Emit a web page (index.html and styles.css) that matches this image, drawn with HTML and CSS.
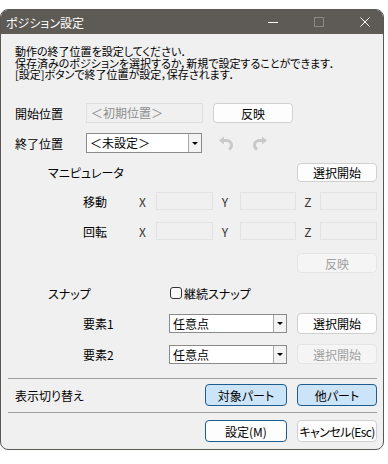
FILE: index.html
```html
<!DOCTYPE html>
<html lang="ja">
<head>
  <meta charset="UTF-8">
  <title>ポジション設定</title>
  <link rel="stylesheet" href="styles.css">
</head>
<body>
<div class="window">
  <div class="titlebar">
    <span class="title">ポジション設定</span>
    <div class="controls">
      <span class="ctl-min"></span>
      <span class="ctl-max"></span>
      <svg class="ctl-close" width="10" height="10" viewBox="0 0 10 10">
        <path d="M0.5 0.5 L9.5 9.5 M9.5 0.5 L0.5 9.5" stroke="#fff" stroke-width="1" fill="none"/>
      </svg>
    </div>
  </div>

  <div class="content">
    <div class="desc">
      <div class="desc-line">動作の終了位置を設定してください．</div>
      <div class="desc-line">保存済みのポジションを選択するか，新規で設定することができます．</div>
      <div class="desc-line">[設定]ボタンで終了位置が設定，保存されます．</div>
    </div>

    <div class="row row-start">
      <span class="label w71">開始位置</span>
      <div class="field field-disabled">＜初期位置＞</div>
      <button class="btn">反映</button>
    </div>

    <div class="row row-end">
      <span class="label w71">終了位置</span>
      <div class="combo combo-end">
        <span class="combo-text">＜未設定＞</span>
        <span class="combo-drop"><i class="tri"></i></span>
      </div>
      <svg class="icon-undo" width="16" height="16" viewBox="0 0 16 16">
        <path d="M1 5.5 L6 1.5 L6 9.5 Z" fill="#c9c9c9"/>
        <path d="M5 5.5 H8.5 C11.5 5.5 13.5 7.5 13.5 10 C13.5 12 12.5 13.5 11 14.5" stroke="#c9c9c9" stroke-width="3" fill="none"/>
      </svg>
      <svg class="icon-redo" width="16" height="16" viewBox="0 0 16 16">
        <path d="M15 5.5 L10 1.5 L10 9.5 Z" fill="#c9c9c9"/>
        <path d="M11 5.5 H7.5 C4.5 5.5 2.5 7.5 2.5 10 C2.5 12 3.5 13.5 5 14.5" stroke="#c9c9c9" stroke-width="3" fill="none"/>
      </svg>
    </div>

    <div class="row row-mani indent1">
      <span class="label">マニピュレータ</span>
      <button class="btn push-right">選択開始</button>
    </div>

    <div class="row row-move indent2">
      <span class="label w56">移動</span>
      <span class="axis ax-x">X</span>
      <div class="xyz"></div>
      <span class="axis ax-y">Y</span>
      <div class="xyz"></div>
      <span class="axis ax-z">Z</span>
      <div class="xyz"></div>
    </div>

    <div class="row row-rot indent2">
      <span class="label w56">回転</span>
      <span class="axis ax-x">X</span>
      <div class="xyz"></div>
      <span class="axis ax-y">Y</span>
      <div class="xyz"></div>
      <span class="axis ax-z">Z</span>
      <div class="xyz"></div>
    </div>

    <div class="row row-apply">
      <button class="btn btn-disabled push-right" disabled>反映</button>
    </div>

    <div class="row row-snap indent1">
      <span class="label w122">スナップ</span>
      <span class="check"></span>
      <span class="check-label">継続スナップ</span>
    </div>

    <div class="row row-el1 indent2">
      <span class="label w86">要素1</span>
      <div class="combo combo-el">
        <span class="combo-text">任意点</span>
        <span class="combo-drop"><i class="tri"></i></span>
      </div>
      <button class="btn">選択開始</button>
    </div>

    <div class="row row-el2 indent2">
      <span class="label w86">要素2</span>
      <div class="combo combo-el">
        <span class="combo-text">任意点</span>
        <span class="combo-drop"><i class="tri"></i></span>
      </div>
      <button class="btn btn-disabled" disabled>選択開始</button>
    </div>

    <div class="sep sep-1"></div>

    <div class="row row-view">
      <span class="label">表示切り替え</span>
      <div class="btn-pair push-right">
        <button class="btn btn-toggle btn-wide">対象パート</button>
        <button class="btn btn-toggle">他パート</button>
      </div>
    </div>

    <div class="sep sep-2"></div>

    <div class="row row-footer">
      <div class="btn-pair push-right">
        <button class="btn btn-default btn-wide">設定(M)</button>
        <button class="btn btn-cancel">キャンセル(Esc)</button>
      </div>
    </div>
  </div>
</div>
</body>
</html>
```

FILE: styles.css
```css
body {
  margin: 0;
  background: #ffffff;
  font-family: "Noto Sans CJK JP", "Noto Sans", sans-serif;
  font-size: 12px;
  font-feature-settings: "palt";
  color: #000;
}

.window {
  width: 384px;
  margin-top: 9px;
  box-sizing: border-box;
  border: 1px solid #5b5753;
  border-radius: 8px;
  overflow: hidden;
  background: #f0f0f0;
}

/* タイトルバー */
.titlebar {
  height: 24px;
  background: #5e5a55;
  display: flex;
  align-items: center;
  padding: 0 13px 0 5px;
}
.title {
  color: #fff;
  font-size: 12px;
}
.controls {
  margin-left: auto;
  display: flex;
  align-items: center;
  gap: 36px;
}
.ctl-min {
  display: block;
  width: 10px;
  height: 1px;
  background: #fff;
}
.ctl-max {
  display: block;
  width: 8px;
  height: 8px;
  border: 1px solid #8c8884;
}
.ctl-close {
  display: block;
}

/* 本体 */
.content {
  padding: 0 6px 7px 14px;
}

.desc {
  margin-top: 12px;
  height: 57px;
  font-size: 11px;
}
.desc-line {
  height: 11.5px;
  line-height: 11.5px;
  white-space: nowrap;
}

.row {
  display: flex;
  align-items: center;
}
.indent1 { padding-left: 33px; }
.indent2 { padding-left: 68px; }

.label { flex: none; }
.w56 { width: 56px; }
.w71 { width: 71px; }
.w86 { width: 86px; }
.w122 { width: 122px; }

.push-right { margin-left: auto; }

.row-start { height: 20px; }
.row-end { height: 20px; margin-top: 10px; }
.row-mani { height: 19px; margin-top: 10px; }
.row-move { height: 18px; margin-top: 10px; }
.row-rot { height: 18px; margin-top: 12px; }
.row-apply { height: 20px; margin-top: 13px; }
.row-snap { height: 14px; margin-top: 13px; }
.row-el1 { height: 21px; margin-top: 13px; }
.row-el2 { height: 20px; margin-top: 10px; }
.row-view { height: 22px; margin-top: 5px; }
.row-footer { height: 22px; margin-top: 7px; }

/* 入力欄 */
.field {
  box-sizing: border-box;
  height: 20px;
  line-height: 18px;
  padding: 0 4px;
  border: 1px solid #dedede;
  width: 117px;
  margin-right: 10px;
}
.field-disabled {
  color: #8d8d8d;
  background: #f0f0f0;
}

.xyz {
  box-sizing: border-box;
  width: 57px;
  height: 18px;
  border: 1px solid #e2e2e2;
  background: #f0f0f0;
}

.axis {
  flex: none;
  box-sizing: border-box;
  color: #333;
}
.ax-x { width: 17px; }
.ax-y { width: 27px; padding-left: 9px; }
.ax-z { width: 24px; padding-left: 8px; }

/* コンボボックス */
.combo {
  box-sizing: border-box;
  height: 20px;
  display: flex;
  border: 1px solid #8a8a8a;
  background: #fff;
}
.combo-end { width: 116px; }
.combo-el { width: 118px; height: 19px; margin-right: 10px; }
.combo-text {
  flex: 1;
  padding-left: 3px;
  line-height: 17px;
}
.combo-drop {
  width: 12px;
  border-left: 1px solid #a8a8a8;
  background: #f3f3f3;
  display: flex;
  align-items: center;
  justify-content: center;
}
.tri {
  width: 0;
  height: 0;
  border-left: 3px solid transparent;
  border-right: 3px solid transparent;
  border-top: 3px solid #000;
}

.icon-undo { margin-left: 16px; display: block; }
.icon-redo { margin-left: 18px; display: block; }

/* ボタン */
.btn {
  box-sizing: border-box;
  width: 80px;
  height: 20px;
  padding: 0;
  font-family: inherit;
  font-size: 12px;
  font-feature-settings: "palt";
  color: #000;
  background: #fdfdfd;
  border: 1px solid #d0d0d0;
  border-radius: 4px;
  white-space: nowrap;
}
.row-mani .btn { height: 19px; }
.row-el1 .btn { height: 21px; }
.btn-disabled {
  color: #a0a0a0;
  background: #f5f5f5;
  border-color: #e5e5e5;
}
.btn-pair {
  display: flex;
  gap: 10px;
}
.btn-pair .btn { height: 22px; }
.btn-wide { width: 82px; }
.btn-toggle {
  background: #cce4f7;
  border-color: #1c5c8f;
}
.btn-default {
  background: #fdfdfd;
  border-color: #1c5c8f;
}
.btn-cancel {
  letter-spacing: -0.6px;
}

/* チェックボックス */
.check {
  box-sizing: border-box;
  width: 12px;
  height: 12px;
  border: 1px solid #333;
  border-radius: 3px;
  background: #f8f8f8;
}
.check-label { margin-left: 2px; }

.sep {
  height: 1px;
  background: #a0a0a0;
  margin-left: -7px;
}
.sep-1 { margin-top: 14px; }
.sep-2 { margin-top: 6px; }
```
